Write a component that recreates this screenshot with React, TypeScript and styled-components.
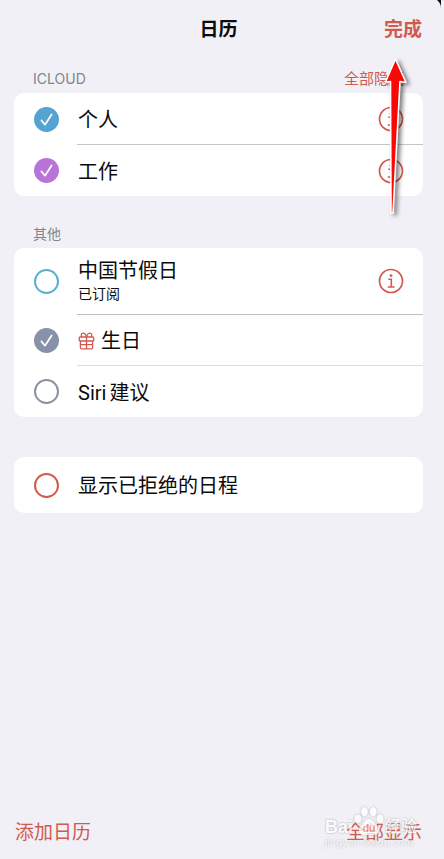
import React, { useState } from "react";
import styled, { createGlobalStyle } from "styled-components";

const RED = "#d05a4f";

const GlobalStyle = createGlobalStyle`
  * { box-sizing: border-box; }
  body {
    margin: 0;
    background: #f1f0f6;
    color: #0b0b0b;
    font-family: Inter, "Noto Sans CJK SC", sans-serif;
  }
  h1, h2, ul { margin: 0; padding: 0; }
  button { font: inherit; border: 0; padding: 0; background: none; cursor: pointer; }
`;

const Page = styled.div`
  position: relative;
  display: flex;
  flex-direction: column;
  min-height: 100vh;
  padding: 0 21px 0 14px;
  overflow: hidden;
`;

const Header = styled.header`
  display: grid;
  grid-template-columns: 1fr auto 1fr;
  align-items: center;
  height: 60px;
`;

const Title = styled.h1`
  grid-column: 2;
  font-size: 19px;
  line-height: 28px;
  font-weight: 700;
`;

const DoneButton = styled.button`
  && {
    justify-self: end;
    padding-right: 1px;
    color: ${RED};
    font-size: 19px;
    line-height: 28px;
    font-weight: 700;
  }
`;

const Main = styled.main`
  flex: 1;
`;

const SectionHead = styled.div<{ $gap: number }>`
  display: flex;
  justify-content: space-between;
  align-items: center;
  height: 20px;
  margin: ${(p) => p.$gap}px 19px 4px;
`;

const SectionTitle = styled.h2`
  font-size: 14px;
  line-height: 20px;
  font-weight: 400;
  color: #85848b;
`;

const HideAll = styled.button`
  && {
    color: ${RED};
    font-size: 15px;
    line-height: 20px;
  }
`;

const Card = styled.ul<{ $gap?: number }>`
  list-style: none;
  background: #fff;
  border-radius: 10px;
  margin-top: ${(p) => p.$gap ?? 0}px;
  overflow: hidden;
`;

const Row = styled.li`
  display: flex;
  padding-left: 19px;
`;

const RowLabel = styled.label`
  flex: 1;
  display: flex;
  align-items: stretch;
  cursor: pointer;
`;

const CheckCell = styled.span`
  display: grid;
  place-items: center;
  width: 26px;
  margin-right: 18px;
  > * { grid-area: 1 / 1; }
`;

const Check = styled.input<{ $color: string }>`
  appearance: none;
  width: 25px;
  height: 25px;
  margin: 0;
  border: 2px solid ${(p) => p.$color};
  border-radius: 50%;
  background: #fff;
  &:checked { background: ${(p) => p.$color}; }
`;

const Tick = styled.svg`
  pointer-events: none;
  z-index: 1;
`;

const RowBody = styled.div<{ $height: number; $line?: string }>`
  flex: 1;
  display: flex;
  align-items: center;
  justify-content: space-between;
  min-height: ${(p) => p.$height}px;
  border-bottom: ${(p) => (p.$line ? `1px solid ${p.$line}` : "0")};
`;

const RowText = styled.span<{ $single: boolean }>`
  display: flex;
  flex-direction: column;
  padding: ${(p) => (p.$single ? 2 : 0)}px 0 0 1px;
`;

const Name = styled.span`
  display: flex;
  align-items: center;
  gap: 6px;
  font-size: 20px;
  line-height: 26px;
  white-space: pre;
`;

const Latin = styled.span`
  font-family: Roboto, sans-serif;
`;

const NameText = styled.span`
  display: inline-flex;
  gap: 3px;
`;

const Sub = styled.span`
  font-size: 14px;
  line-height: 20px;
`;

const InfoCell = styled.div<{ $line?: string }>`
  display: flex;
  align-items: center;
  padding-right: 19px;
  border-bottom: ${(p) => (p.$line ? `1px solid ${p.$line}` : "0")};
`;

const InfoButton = styled.button`
  display: flex;
`;

const Footer = styled.footer`
  position: relative;
  display: flex;
  justify-content: space-between;
  padding: 0 1px 12px;
`;

const FooterButton = styled.button`
  && {
    color: ${RED};
    font-size: 19px;
    line-height: 28px;
  }
`;

const Watermark = styled.div`
  position: absolute;
  right: 6px;
  bottom: 13px;
  display: grid;
  color: #fff;
  opacity: 0.75;
  pointer-events: none;
  filter: drop-shadow(0 0 1px #98989e);
`;

const Brand = styled.div`
  display: flex;
  align-items: flex-end;
  height: 32px;
  font-family: "Liberation Sans", "Noto Sans CJK SC", sans-serif;
  font-size: 18px;
  line-height: 22px;
  font-weight: 700;
`;

const Paw = styled.svg`
  align-self: flex-start;
`;

const BrandCn = styled.span`
  font-size: 16px;
  font-weight: 500;
`;

const Site = styled.div`
  font-family: "Liberation Sans", sans-serif;
  font-size: 11px;
  line-height: 8px;
  opacity: 0.7;
`;

const Arrow = styled.svg`
  position: absolute;
  top: 52px;
  right: 32px;
  pointer-events: none;
  filter: drop-shadow(3px 2px 2px rgba(0, 0, 0, 0.5));
`;

const Corner = styled.svg`
  position: absolute;
  top: 0;
  right: 3px;
`;

const InfoIcon = () => (
  <svg width="26" height="26" viewBox="0 0 26 26" fill="none" stroke={RED}>
    <circle cx="13" cy="13" r="11.5" strokeWidth="1.7" />
    <circle cx="13" cy="7.6" r="1.4" fill={RED} stroke="none" />
    <path d="M10.3 11.3h3v7.4M9.8 19h6.8" strokeWidth="1.6" />
  </svg>
);

const GiftIcon = () => (
  <svg width="17" height="18" viewBox="0 0 17 18" fill="none" stroke={RED} strokeWidth="1.3" strokeLinejoin="round">
    <rect x="1.2" y="5" width="14.6" height="4" rx="1" />
    <path d="M2.4 9v6.4q0 1.4 1.4 1.4h9.4q1.4 0 1.4-1.4V9M8.5 5v11.8M2.4 12.6h12.2M8.5 5C7.8 2.4 6.5 1.2 5.1 1.2 3 1.2 2.5 4 4.4 5M8.5 5c.7-2.6 2-3.8 3.4-3.8 2.1 0 2.6 2.8.7 3.8" />
  </svg>
);

type Item = {
  id: string;
  name: React.ReactNode;
  label: string;
  color: string;
  checked?: boolean;
  sub?: string;
  gift?: boolean;
  info?: boolean;
  line?: string;
  height: number;
};

function CalendarRow({ item }: { item: Item }) {
  const [on, setOn] = useState(!!item.checked);
  return (
    <Row>
      <RowLabel>
        <CheckCell>
          <Check type="checkbox" $color={item.color} checked={on} onChange={() => setOn(!on)} />
          {on && (
            <Tick width="25" height="25" viewBox="0 0 25 25" fill="none" stroke="#fff" strokeWidth="1.7" strokeLinecap="round" strokeLinejoin="round">
              <path d="M7.4 13.4l3.6 4.3 6.6-10.2" />
            </Tick>
          )}
        </CheckCell>
        <RowBody $height={item.height} $line={item.line}>
          <RowText $single={!item.sub}>
            <Name>
              {item.gift && <GiftIcon />}
              <NameText>{item.name}</NameText>
            </Name>
            {item.sub && <Sub>{item.sub}</Sub>}
          </RowText>
        </RowBody>
      </RowLabel>
      {item.info && (
        <InfoCell $line={item.line}>
          <InfoButton type="button" aria-label={item.label}>
            <InfoIcon />
          </InfoButton>
        </InfoCell>
      )}
    </Row>
  );
}

const cloud: Item[] = [
  { id: "personal", name: "个人", label: "个人", color: "#55a3d1", checked: true, info: true, line: "#c6c6c8", height: 52 },
  { id: "work", name: "工作", label: "工作", color: "#b974d8", checked: true, info: true, height: 51 },
];

const others: Item[] = [
  { id: "holiday", name: "中国节假日", label: "中国节假日", color: "#5caed0", sub: "已订阅", info: true, line: "#bdbdc2", height: 67 },
  { id: "birthday", name: "生日", label: "生日", color: "#8792aa", checked: true, gift: true, line: "#dedee2", height: 51 },
  { id: "siri", name: <><Latin>Siri</Latin>建议</>, label: "Siri建议", color: "#8a92a0", height: 51 },
];

const declined: Item = { id: "declined", name: "显示已拒绝的日程", label: "显示已拒绝的日程", color: RED, height: 56 };

export default function App() {
  return (
    <Page>
      <GlobalStyle />
      <Header>
        <Title>日历</Title>
        <DoneButton type="button">完成</DoneButton>
      </Header>
      <Main>
        <SectionHead $gap={9}>
          <SectionTitle>ICLOUD</SectionTitle>
          <HideAll type="button">全部隐藏</HideAll>
        </SectionHead>
        <Card>
          {cloud.map((i) => <CalendarRow key={i.id} item={i} />)}
        </Card>
        <SectionHead $gap={28}>
          <SectionTitle>其他</SectionTitle>
        </SectionHead>
        <Card>
          {others.map((i) => <CalendarRow key={i.id} item={i} />)}
        </Card>
        <Card $gap={40}>
          <CalendarRow item={declined} />
        </Card>
      </Main>
      <Footer>
        <FooterButton type="button">添加日历</FooterButton>
        <FooterButton type="button">全部显示</FooterButton>
        <Watermark>
          <Brand>
            <span>Bai</span>
            <Paw width="32" height="30" viewBox="0 0 28 28" fill="#fff">
              <ellipse cx="3.6" cy="12" rx="3.2" ry="4" />
              <ellipse cx="9.8" cy="5.400" rx="3.2" ry="4.4" />
              <ellipse cx="18" cy="5.400" rx="3.200" ry="4.400" />
              <ellipse cx="24.400" cy="12" rx="3.200" ry="4" />
              <path d="M14 12c-4 0-4.500 4-7.500 6.500-3.500 3-2 8.500 2.500 8.500h10c4.500 0 6-5.500 2.500-8.500C18.500 16 18 12 14 12z" />
              <text x="8" y="24" fontSize="10" fontWeight="700" fill={RED} fillOpacity="0.7">du</text>
            </Paw>
            <BrandCn>经验</BrandCn>
          </Brand>
          <Site>jingyan.baidu.com</Site>
        </Watermark>
      </Footer>
      <Arrow width="32" height="168" viewBox="0 0 32 168">
        <path d="M15.500 7L26 30.500L20 29.500L13 161L11 161L10.500 29.500L5.500 30Z" fill="#f80808" stroke="#fff" strokeWidth="1.600" strokeLinejoin="round" />
      </Arrow>
      <Corner width="4" height="8" viewBox="0 0 4 8">
        <path d="M0 0h4v8C4 4 2 2 0 0z" fill="#111" />
      </Corner>
    </Page>
  );
}
